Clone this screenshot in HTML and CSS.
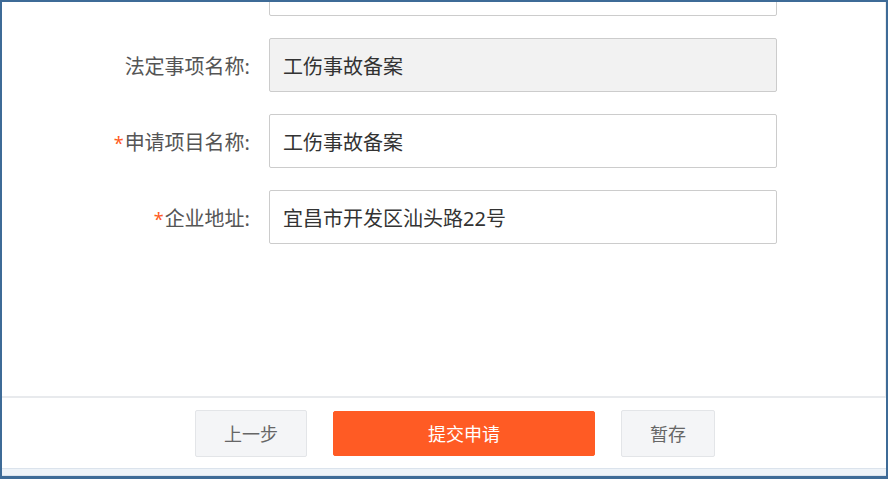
FILE: index.html
```html
<!DOCTYPE html>
<html lang="zh-CN">
<head>
    <meta charset="UTF-8">
    <meta name="viewport" content="width=device-width, initial-scale=1.0">
    <title>工伤事故备案</title>
    <link rel="stylesheet" href="styles.css">
</head>
<body>
    <div class="window">
        <div class="scroll-area">
            <form class="apply-form">
                <div class="form-row">
                    <label class="form-label"></label>
                    <input class="form-input" type="text" value="">
                </div>
                <div class="form-row">
                    <label class="form-label">法定事项名称:</label>
                    <input class="form-input readonly" type="text" value="工伤事故备案" readonly>
                </div>
                <div class="form-row">
                    <label class="form-label"><span class="required">*</span>申请项目名称:</label>
                    <input class="form-input" type="text" value="工伤事故备案">
                </div>
                <div class="form-row">
                    <label class="form-label"><span class="required">*</span>企业地址:</label>
                    <input class="form-input" type="text" value="宜昌市开发区汕头路22号">
                </div>
            </form>
        </div>
        <div class="form-footer">
            <button class="btn btn-prev" type="button">上一步</button>
            <button class="btn btn-primary" type="button">提交申请</button>
            <button class="btn btn-save" type="button">暂存</button>
        </div>
        <div class="status-strip"></div>
    </div>
</body>
</html>
```

FILE: styles.css
```css
body {
    margin: 0;
    padding: 0;
    font-family: 'Noto Sans', 'Noto Sans CJK SC', sans-serif;
    background: #fff;
}
.window {
    width: 888px;
    height: 479px;
    box-sizing: border-box;
    border: 2px solid #3e6b97;
    border-bottom-width: 3px;
    display: flex;
    flex-direction: column;
    background: #fff;
}
.scroll-area {
    flex: 1;
    overflow: hidden;
    border-right: 1px solid #ededed;
}
.apply-form {
    margin-top: -40px;
}
.form-row {
    display: flex;
    align-items: center;
    height: 54px;
    margin-bottom: 22px;
}
.form-label {
    width: 248px;
    text-align: right;
    font-size: 20px;
    color: #555;
    margin-right: 19px;
}
.required {
    color: #ff5b24;
    font-size: 18px;
    margin-right: 1px;
}
.form-input {
    width: 508px;
    height: 54px;
    box-sizing: border-box;
    border: 1px solid #cccccc;
    border-radius: 2px;
    padding: 0 13px;
    font-family: 'Noto Sans', 'Noto Sans CJK SC', sans-serif;
    font-size: 20px;
    color: #333;
    background: #fff;
    outline: none;
}
.form-input.readonly {
    background: #f2f2f2;
}
.form-footer {
    height: 70px;
    border-top: 2px solid #e8eaed;
    display: flex;
    align-items: center;
    justify-content: center;
    gap: 26px;
    padding-left: 22px;
}
.btn {
    height: 47px;
    border: 1px solid #e3e5e8;
    border-radius: 2px;
    background: #f4f5f7;
    color: #666;
    font-family: 'Noto Sans', 'Noto Sans CJK SC', sans-serif;
    font-size: 18px;
    cursor: pointer;
    padding: 0;
}
.btn-prev {
    width: 112px;
}
.btn-save {
    width: 94px;
}
.btn-primary {
    width: 262px;
    height: 45px;
    background: #ff5b24;
    border-color: #ff5b24;
    color: #fff;
}
.status-strip {
    height: 8px;
    box-sizing: border-box;
    border-top: 1px solid #dbe3ec;
    border-bottom: 1px solid #dce4ed;
    background: #eef3f8;
}
```
